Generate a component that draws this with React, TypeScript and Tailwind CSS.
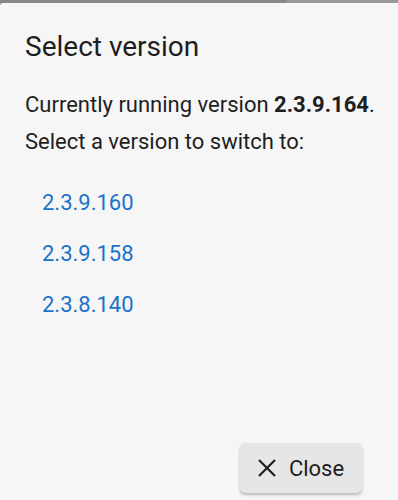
export default function App() {
  const versions = ["2.3.9.160", "2.3.9.158", "2.3.8.140"]

  return (
    <div className="w-[398px] h-[500px] overflow-hidden bg-[#8a8a8a] font-['Roboto',sans-serif]">
      <div className="flex h-[3px]">
        <div className="w-[287px] bg-[#888888]" />
        <div className="flex-1 bg-[#9a9a9a]" />
      </div>
      <div className="h-[497px] bg-[#f6f6f6] rounded-tl-[3px] flex flex-col">
        <h2 className="pl-[25px] pt-[27px] text-[28px] leading-[34px] text-[#1e1e1e]">Select version</h2>
        <div className="pl-[25px] pt-[22px] text-[22px] leading-[37px] text-[#1e1e1e]">
          <p>
            Currently running version <span className="font-bold">2.3.9.164</span>.
          </p>
          <p>Select a version to switch to:</p>
        </div>
        <ul className="pl-[42px] pt-[27px] flex flex-col gap-[19px]">
          {versions.map((v) => (
            <li key={v} className="text-[22px] leading-[32px] text-[#1a73c9]">
              {v}
            </li>
          ))}
        </ul>
        <div className="mt-auto flex justify-end pr-[36px] pb-[7px]">
          <button className="w-[122px] h-[50px] rounded-[5px] bg-[#e6e6e6] shadow-[0_2px_3px_rgba(0,0,0,0.25)] flex items-center justify-center gap-[13px] text-[22px] text-[#1e1e1e]">
            <svg width="18" height="18" viewBox="0 0 18 18" stroke="#1e1e1e" strokeWidth="2.2" strokeLinecap="butt">
              <path d="M1 1 L17 17 M17 1 L1 17" />
            </svg>
            Close
          </button>
        </div>
      </div>
    </div>
  )
}
